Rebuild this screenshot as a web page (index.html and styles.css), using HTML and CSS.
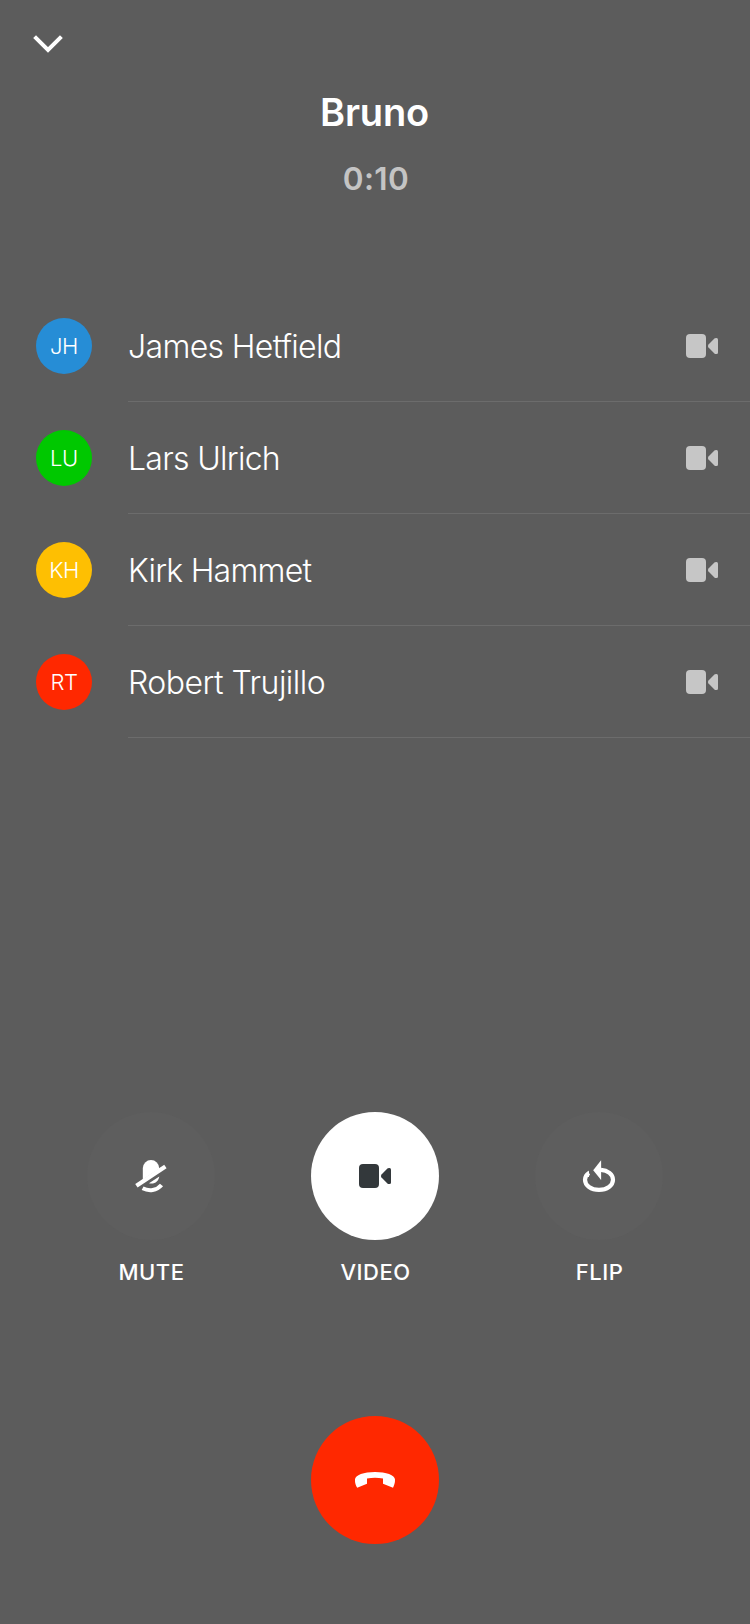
FILE: index.html
```html
<!DOCTYPE html>
<html lang="en">
<head>
<meta charset="utf-8">
<title>Call</title>
<link rel="stylesheet" href="styles.css">
</head>
<body>
<main class="call">
  <header class="header">
    <button class="minimize" aria-label="Minimize"><svg width="32" height="24" viewBox="32 32 32 24"><path d="M34.6 36.6 48 50 61.4 36.6" fill="none" stroke="#fff" stroke-width="4"/></svg></button>
    <h1 class="title">Bruno</h1>
    <p class="timer">0:10</p>
  </header>
  <ul class="people">
    <li class="person"><span class="avatar blue">JH</span><div class="detail"><span class="name n1">James Hetfield</span><svg class="cam" width="32" height="24" viewBox="0 0 32 24"><use href="#camera"/></svg></div></li>
    <li class="person"><span class="avatar green">LU</span><div class="detail"><span class="name n2">Lars Ulrich</span><svg class="cam" width="32" height="24" viewBox="0 0 32 24"><use href="#camera"/></svg></div></li>
    <li class="person"><span class="avatar yellow">KH</span><div class="detail"><span class="name n3">Kirk Hammet</span><svg class="cam" width="32" height="24" viewBox="0 0 32 24"><use href="#camera"/></svg></div></li>
    <li class="person"><span class="avatar red">RT</span><div class="detail"><span class="name n4">Robert Trujillo</span><svg class="cam" width="32" height="24" viewBox="0 0 32 24"><use href="#camera"/></svg></div></li>
  </ul>
  <section class="controls">
    <div class="control">
      <button class="round" aria-label="Mute"><svg width="36" height="36" viewBox="133 1158 36 36">
        <path d="M142.8 1179.5V1168.2a8.2 8.2 0 0 1 16.4 0v.6Z" fill="#fff"/>
        <path d="M136.4 1185.8 165.4 1166.4" stroke="#fff" stroke-width="4.2"/>
        <path d="M149 1183.3 159.3 1176.5C158.6 1181.4 154.7 1184.5 149 1183.3Z" fill="#fff"/>
        <path d="M142.6 1188.2C149 1191.5 156.8 1190.6 161.5 1185" fill="none" stroke="#fff" stroke-width="4"/>
      </svg></button>
      <span class="label">MUTE</span>
    </div>
    <div class="control">
      <button class="round active" aria-label="Video"><svg width="32" height="24" viewBox="0 0 32 24"><use href="#camera"/></svg></button>
      <span class="label">VIDEO</span>
    </div>
    <div class="control">
      <button class="round" aria-label="Flip"><svg width="36" height="36" viewBox="581 1158 36 36">
        <path d="M601 1169.9C607.5 1170.3 613 1174.3 613 1179.8C613 1185.5 607 1189.9 599 1189.9C591 1189.9 585 1185.5 585 1179.8C585 1176.7 586.5 1174.5 589 1172.9" fill="none" stroke="#fff" stroke-width="4.2"/>
        <path d="M589 1170.6V1177L586 1177 584.5 1175Z" fill="#fff"/>
        <path d="M601.1 1160.2V1180L593.2 1170.3Z" fill="#fff"/>
      </svg></button>
      <span class="label">FLIP</span>
    </div>
  </section>
  <button class="hangup" aria-label="End call"><svg width="42" height="20" viewBox="0 0 42 20"><path d="M1 9.5C1 5 10 2 21 2S41 5 41 9.5C41.2 13 40 15.6 39 17.7L29 13.8V8.6Q21 7 13 8.6V13.8L3.2 17.7C1.8 15.6.8 13 1 9.5Z" fill="#fff"/></svg></button>
</main>
<svg class="symbols" width="0" height="0"><defs><g id="camera"><rect width="20" height="24" rx="4"/><path d="M22.5 10.5 28.4 4.6Q29.1 4 30 4H30.5Q32 4 32 5.5V18.5Q32 20 30.5 20H30Q29.1 20 28.4 19.4L22.5 13.5Q21.2 12 22.5 10.5Z"/></g></defs></svg>
</body>
</html>
```
FILE: styles.css
```css
* { box-sizing: border-box; }
body { margin: 0; background: #5c5c5c; color: #fff; font-family: Inter, "Liberation Sans", sans-serif; }
button { border: 0; padding: 0; background: none; color: inherit; }
.call { height: 1624px; display: flex; flex-direction: column; overflow: hidden; }
.header { height: 290px; padding-top: 32px; text-align: center; }
.minimize { display: block; margin-left: 32px; height: 24px; }
.minimize svg { display: block; }
.title { margin: 32px 0 0; padding-right: 1px; font-size: 38px; line-height: 48px; font-weight: 600; letter-spacing: -0.2px; }
.timer { margin: 23px 0 0; padding-left: 2px; font-size: 31.5px; line-height: 40px; font-weight: 600; letter-spacing: 0.4px; color: #c4c4c4; }
.people { margin: 0; padding: 0 0 0 36px; list-style: none; }
.person { display: flex; align-items: center; gap: 36px; height: 112px; }
.avatar { width: 56px; height: 56px; border-radius: 50%; display: flex; align-items: center; justify-content: center; font-size: 22px; font-weight: 300; letter-spacing: -0.4px; }
.blue { background: #268dd6; }
.green { background: #00c800; }
.yellow { background: #febf02; }
.red { background: #ff2800; }
.detail { flex: 1; height: 112px; padding-right: 32px; display: flex; align-items: center; justify-content: space-between; border-bottom: 1px solid #6c6c6c; }
.name { padding-top: 2px; font-size: 32px; line-height: 40px; font-weight: 300; white-space: nowrap; }
.n1 { letter-spacing: -0.65px; }
.n2 { letter-spacing: -0.7px; }
.n3 { letter-spacing: -0.75px; }
.n4 { letter-spacing: -0.52px; }
.cam { fill: #c6c6c6; }
.controls { display: flex; justify-content: space-between; margin-top: 374px; padding: 0 87px; }
.control { display: flex; flex-direction: column; align-items: center; width: 128px; }
.round { width: 128px; height: 128px; border-radius: 50%; background: #5e5e5e; display: flex; align-items: center; justify-content: center; }
.active { background: #fff; fill: #33383b; }
.label { margin-top: 18px; padding-left: 1px; font-size: 22px; line-height: 28px; font-weight: 500; letter-spacing: 0.5px; }
.hangup { width: 128px; height: 128px; margin: 130px auto 0; border-radius: 50%; background: #ff2800; display: flex; align-items: center; justify-content: center; }
.symbols { position: absolute; }
```
